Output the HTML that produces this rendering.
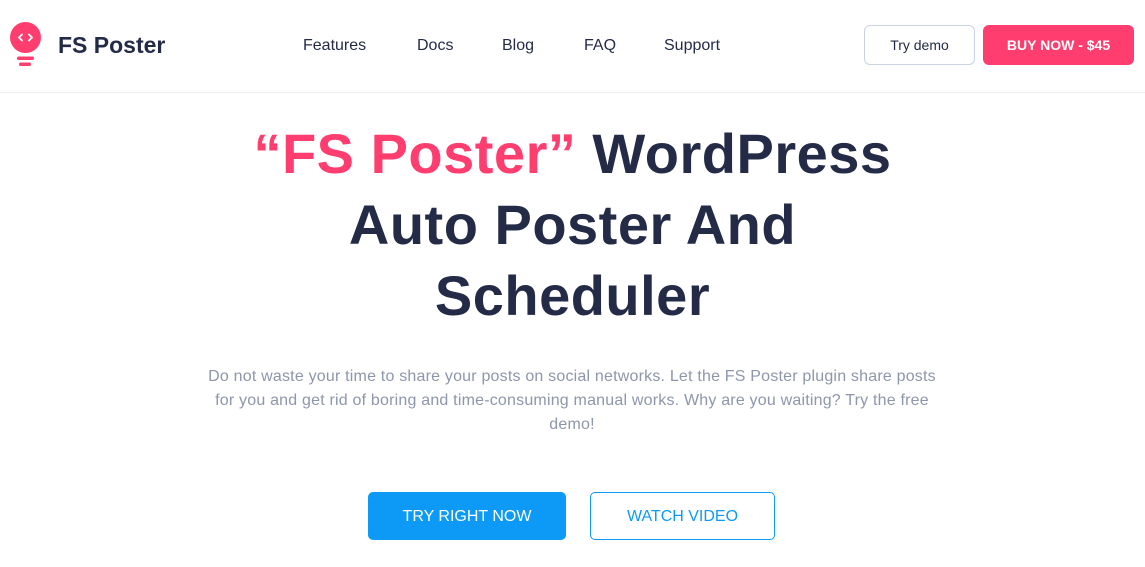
<!DOCTYPE html>
<html><head><meta charset="utf-8"><style>
*{margin:0;padding:0;box-sizing:border-box}
body{width:1145px;height:567px;background:#fff;font-family:"Liberation Sans",sans-serif;overflow:hidden;position:relative;color:#232b47}
.hdr{position:absolute;left:0;top:0;width:1145px;height:93px;border-bottom:1px solid #eceef3}
.logo{position:absolute;left:58px;top:32px;font-size:23px;font-weight:bold;color:#232b47}
.nav a{position:absolute;top:37px;font-size:16px;color:#232b47;text-decoration:none}
.b1{position:absolute;left:864px;top:25px;width:111px;height:40px;border:1px solid #c9d3e3;border-radius:6px;font-size:14px;text-align:center;line-height:38px;color:#232b47}
.b2{position:absolute;left:983px;top:25px;width:151px;height:40px;background:#ff3d6f;border-radius:6px;font-size:14px;font-weight:bold;color:#fff;text-align:center;line-height:40px}
h1{position:absolute;left:0;top:118px;width:1145px;text-align:center;font-size:56px;line-height:71px;font-weight:bold;color:#232b47;letter-spacing:0.5px}
h1 span{color:#ff3d6f}
p{position:absolute;left:202px;top:365px;width:740px;text-align:center;font-size:16px;line-height:24px;color:#8d96ab;letter-spacing:0.2px}
.t1{position:absolute;left:368px;top:492px;width:198px;height:48px;background:#0d9af6;border-radius:5px;color:#fff;font-size:16px;text-align:center;line-height:50px}
.t2{position:absolute;left:590px;top:492px;width:185px;height:48px;border:1px solid #0d9af6;border-radius:5px;color:#0d9af6;font-size:16px;text-align:center;line-height:48px}
</style></head><body>
<div class="hdr">
<svg style="position:absolute;left:0;top:0" width="50" height="70">
<circle cx="25.5" cy="37.5" r="15.5" fill="#ff3d6f"/>
<path d="M22 34.5l-3 3 3 3M29 34.5l3 3-3 3" stroke="#fff" stroke-width="1.8" fill="none" stroke-linecap="round" stroke-linejoin="round"/>
<rect x="17" y="56.5" width="17" height="3.5" rx="1.7" fill="#ff3d6f"/>
<rect x="19" y="62.5" width="12" height="3.5" rx="1.7" fill="#ff3d6f"/>
</svg>
<div class="logo">FS Poster</div>
<div class="nav"><a style="left:303px">Features</a><a style="left:417px">Docs</a><a style="left:502px">Blog</a><a style="left:584px">FAQ</a><a style="left:664px">Support</a></div>
<div class="b1">Try demo</div>
<div class="b2">BUY NOW - $45</div>
</div>
<h1><span>“FS Poster”</span> WordPress<br>Auto Poster And<br>Scheduler</h1>
<p>Do not waste your time to share your posts on social networks. Let the FS Poster plugin share posts<br>for you and get rid of boring and time-consuming manual works. Why are you waiting? Try the free<br>demo!</p>
<div class="t1">TRY RIGHT NOW</div>
<div class="t2">WATCH VIDEO</div>
</body></html>
